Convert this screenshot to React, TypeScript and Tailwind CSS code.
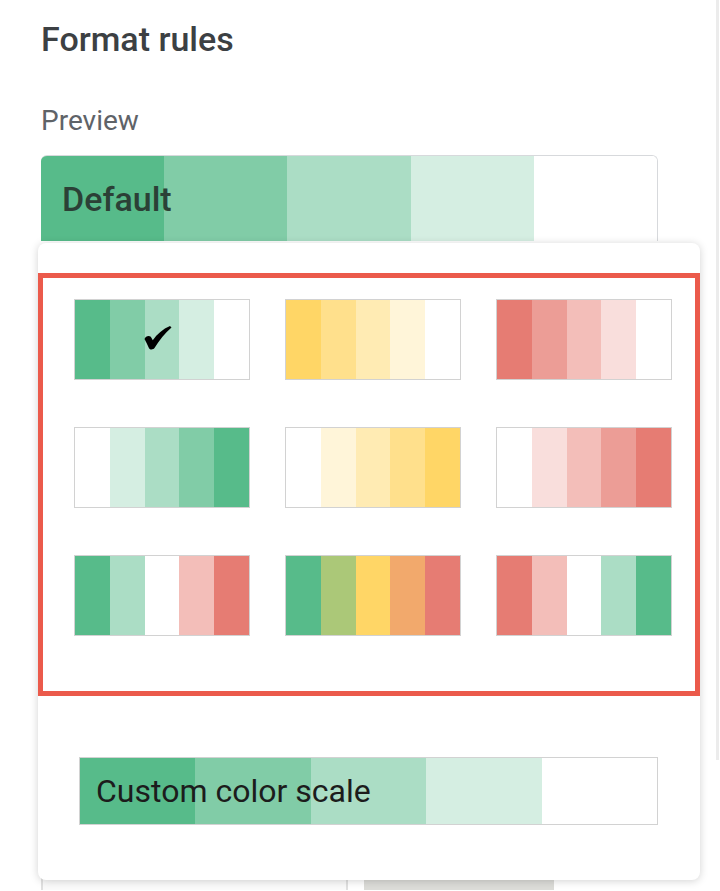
import React from "react";

const GREEN = ["#57bb8a", "#81cca7", "#abddc5", "#d5eee2", "#ffffff"];
const YELLOW = ["#ffd666", "#ffe08c", "#ffebb3", "#fff5d9", "#ffffff"];
const RED = ["#e67c73", "#ec9d96", "#f3beb9", "#f9dedc", "#ffffff"];

const SCALES: string[][] = [
  GREEN,
  YELLOW,
  RED,
  [...GREEN].reverse(),
  [...YELLOW].reverse(),
  [...RED].reverse(),
  ["#57bb8a", "#abddc5", "#ffffff", "#f3beb9", "#e67c73"],
  ["#57bb8a", "#abc878", "#ffd666", "#f2a96c", "#e67c73"],
  ["#e67c73", "#f3beb9", "#ffffff", "#abddc5", "#57bb8a"],
];

function Check() {
  return (
    <svg
      width="28"
      height="26"
      viewBox="0 0 28 26"
      className="absolute left-[69px] top-[25px]"
    >
      <path
        d="M0.5 14 C1.5 11 5 10 6.8 11.8 L8.8 15.2 C13 9 19 4 26 1 L27.5 2.6 C21 8.5 15 15.5 10.5 23 C9.2 24.8 6 25 5 23.2 C3.5 20 2.2 17 0.5 14 Z"
        fill="#000"
      />
    </svg>
  );
}

function Swatch({ colors, checked }: { colors: string[]; checked?: boolean }) {
  return (
    <div className="relative flex h-[81px] w-[176px] border border-[#d2d2d2]">
      {colors.map((c, i) => (
        <div key={i} className="flex-1" style={{ backgroundColor: c }} />
      ))}
      {checked ? <Check /> : null}
    </div>
  );
}

export default function App() {
  return (
    <div className="flex min-h-[891px] w-[720px] overflow-hidden bg-white [font-family:Roboto,'Liberation_Sans',sans-serif]">
      <div className="flex w-[716px] flex-col">
        <div className="pl-[41px] pt-[19px] text-[34px] font-medium leading-[40px] text-[#3c4043]">
          Format rules
        </div>
        <div className="pl-[41px] pt-[46px] text-[28px] leading-[32px] text-[#5f6368]">
          Preview
        </div>
        <div className="relative ml-[41px] mt-[18px] flex h-[86px] w-[617px] overflow-hidden rounded-t-[6px] border-r border-t border-[#d7d9dc]">
          {GREEN.map((c, i) => (
            <div key={i} className="flex-1" style={{ backgroundColor: c }} />
          ))}
          <div className="absolute inset-0 flex items-center pl-[21px] pt-[2px] text-[34px] font-medium text-[#2b4036]">
            Default
          </div>
        </div>

        <div className="relative z-10 ml-[38px] mt-[2px] flex h-[637px] w-[662px] flex-col rounded-[8px] bg-white shadow-[0_1px_9px_rgba(0,0,0,0.18)]">
          <div className="mt-[30px] border-[5px] border-[#eb5a4b] pb-[55px] pl-[31px] pt-[21px]">
            <div className="grid grid-cols-[176px_176px_176px] gap-x-[35px] gap-y-[47px]">
              {SCALES.map((s, i) => (
                <Swatch key={i} colors={s} checked={i === 0} />
              ))}
            </div>
          </div>
          <div className="relative ml-[41px] mt-[61px] flex h-[68px] w-[579px] border border-[#d2d2d2]">
            {GREEN.map((c, i) => (
              <div key={i} className="flex-1" style={{ backgroundColor: c }} />
            ))}
            <div className="absolute inset-0 flex items-center pl-[16px] text-[32px] text-[#1c1c1c]">
              Custom color scale
            </div>
          </div>
        </div>

        <div className="-mt-[10px] flex h-[20px] pl-[41px]">
          <div className="h-full w-[307px] border-l-2 border-r-2 border-[#e0e0e0] bg-[#fafafa]" />
          <div className="ml-[16px] h-full w-[190px] bg-[#dcdcd8]" />
        </div>
      </div>
      <div className="flex w-[4px] flex-col">
        <div className="h-[760px] w-[3px] bg-[#ececec]" />
      </div>
    </div>
  );
}
